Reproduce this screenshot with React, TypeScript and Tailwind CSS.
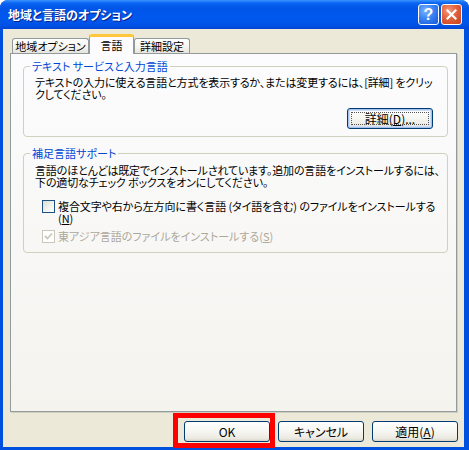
import type { ReactNode } from "react";

// XP-style push button
function XpButton({ children, focused = false, className = "" }: { children: ReactNode; focused?: boolean; className?: string }) {
  return (
    <div
      className={`relative flex h-[21px] w-[86px] items-center justify-center rounded-[3px] border border-[#003C74] bg-[linear-gradient(180deg,#ffffff_0%,#f7f7f4_45%,#eceae2_85%,#d8d4c6_100%)] text-[12px] leading-[12px] ${
        focused ? "shadow-[inset_0_0_0_1px_#a8c4ee,inset_0_0_0_2px_#cfdef7]" : ""
      } ${className}`}
    >
      {focused && <span className="pointer-events-none absolute inset-[3px] border border-dotted border-[#555]" />}
      {children}
    </div>
  );
}

function Checkbox({ checked = false, disabled = false }: { checked?: boolean; disabled?: boolean }) {
  return (
    <span
      className={`flex h-[13px] w-[13px] shrink-0 items-center justify-center border ${
        disabled
          ? "border-[#CAC8BB] bg-white"
          : "border-[#1C5180] bg-[linear-gradient(135deg,#dcdcd7_0%,#f2f2ef_55%,#ffffff_100%)]"
      }`}
    >
      {checked && (
        <svg width="9" height="9" viewBox="0 0 9 9">
          <path d="M1 4 L3.5 6.5 L8 1.5" fill="none" stroke={disabled ? "#CAC8BB" : "#21A121"} strokeWidth="1.8" />
        </svg>
      )}
    </span>
  );
}

const tabIdle =
  "mb-px flex h-[15px] items-center justify-center whitespace-nowrap rounded-t-[3px] border border-b-0 border-[#919B9C] bg-[linear-gradient(180deg,#ffffff_0%,#f3f3ef_60%,#e6e4dc_100%)]";

function App() {
  return (
    <div className="relative h-[450px] w-[469px] overflow-hidden bg-white font-['Noto_Sans_CJK_JP','Noto_Sans_CJK_SC',sans-serif] text-[11px] leading-[12px] text-black [font-feature-settings:'palt']">
      <div className="flex h-full flex-col rounded-t-[8px] bg-[#0050E0]">
        {/* ── Title bar ── */}
        <div className="flex h-[29px] shrink-0 items-center rounded-t-[8px] bg-[linear-gradient(180deg,#3d95ff_0px,#0a66f2_3px,#0055e8_8px,#0058ee_18px,#0052e6_25px,#0046d4_29px)] pl-[8px] pr-[7px]">
          <span className="text-[12px] font-bold leading-[13px] text-white [text-shadow:1px_1px_0_#0a1f8a]">
            地域と言語のオプション
          </span>
          <div className="ml-auto flex gap-[2px]">
            <div className="flex h-[21px] w-[21px] items-center justify-center rounded-[3px] border border-white bg-[radial-gradient(circle_at_35%_30%,#7fb4ff_0%,#3a84f4_45%,#1656d8_100%)] text-[16px] font-bold leading-[16px] text-white [font-family:'Liberation_Sans',sans-serif]">
              ?
            </div>
            <div className="flex h-[21px] w-[21px] items-center justify-center rounded-[3px] border border-white bg-[radial-gradient(circle_at_35%_30%,#f39a7c_0%,#e2603c_45%,#c2401c_100%)]">
              <svg width="11" height="11" viewBox="0 0 11 11">
                <path d="M1.5 1.5 L9.5 9.5 M9.5 1.5 L1.5 9.5" stroke="#fff" strokeWidth="2.2" strokeLinecap="square" />
              </svg>
            </div>
          </div>
        </div>

        {/* ── Client area ── */}
        <div className="mb-[3px] ml-[3px] mr-[5px] flex flex-1 flex-col bg-[#ECE9D8] px-[7px] pt-[5px]">
          {/* tabs */}
          <div className="relative z-10 -mb-px flex h-[20px] items-end pl-[2px]">
            <div className={`${tabIdle} w-[77px]`}>地域オプション</div>
            <div className="flex h-[20px] w-[45px] flex-col rounded-t-[3px] border border-b-0 border-[#919B9C] border-t-transparent bg-[#FCFCFE]">
              <div className="-mx-px -mt-px h-[3px] rounded-t-[3px] bg-[#FFC83C]" />
              <div className="flex flex-1 items-center justify-center pb-[2px]">言語</div>
            </div>
            <div className={`${tabIdle} w-[56px]`}>詳細設定</div>
          </div>

          {/* panel */}
          <div className="flex min-w-0 flex-1 flex-col border border-[#919B9C] bg-[linear-gradient(180deg,#fcfcfe_0%,#f4f3ee_100%)] pl-[12px] pr-[8px] shadow-[1px_1px_0_#d0cec2]">
            {/* ── Text services group ── */}
            <fieldset className="mt-[6px] min-w-0 rounded-[4px] border border-[#D0D0BF] pb-[7px] pl-[11px] pr-[14px] pt-[3px]">
              <legend className="-ml-[5px] px-[2px] leading-[13px] text-[#0046D5]">テキスト サービスと入力言語</legend>
              <p className="whitespace-nowrap tracking-[-0.15px]">
                テキストの入力に使える言語と方式を表示するか、または変更するには、[詳細] をクリッ
                <br />
                クしてください。
              </p>
              <div className="mt-[8px] flex justify-end">
                <XpButton focused className="h-[20px] w-[85px]">
                  詳細(<span className="underline underline-offset-1">D</span>)...
                </XpButton>
              </div>
            </fieldset>

            {/* ── Supplemental language support ── */}
            <fieldset className="mt-[10px] min-w-0 rounded-[4px] border border-[#D0D0BF] pb-[9px] pl-[11px] pr-[14px] pt-[4px]">
              <legend className="-ml-[5px] px-[2px] leading-[13px] text-[#0046D5]">補足言語サポート</legend>
              <p className="whitespace-nowrap tracking-[-0.15px]">
                言語のほとんどは既定でインストールされています。追加の言語をインストールするには、
                <br />
                下の適切なチェック ボックスをオンにしてください。
              </p>
              <div className="ml-[7px] mt-[12px] flex items-start gap-[3px]">
                <Checkbox />
                <span className="whitespace-nowrap tracking-[-0.1px]">
                  複合文字や右から左方向に書く言語 (タイ語を含む) のファイルをインストールする
                  <br />
                  (<span className="underline underline-offset-1">N</span>)
                </span>
              </div>
              <div className="ml-[7px] mt-[6px] flex items-start gap-[3px] text-[#ACA899]">
                <Checkbox checked disabled />
                <span className="whitespace-nowrap">
                  東アジア言語のファイルをインストールする(<span className="underline underline-offset-1">S</span>)
                </span>
              </div>
            </fieldset>
          </div>

          {/* ── Dialog buttons ── */}
          <div className="mb-[5px] mt-[9px] flex justify-end gap-[8px]">
            <XpButton>OK</XpButton>
            <XpButton>キャンセル</XpButton>
            <XpButton className="-mr-px">
              適用(<span className="underline underline-offset-1">A</span>)
            </XpButton>
          </div>
        </div>
      </div>

      {/* red highlight around OK */}
      <div className="pointer-events-none absolute left-[173px] top-[413px] h-[35px] w-[102px] border-[5px] border-[#FF0000]" />
    </div>
  );
}

export default App;
